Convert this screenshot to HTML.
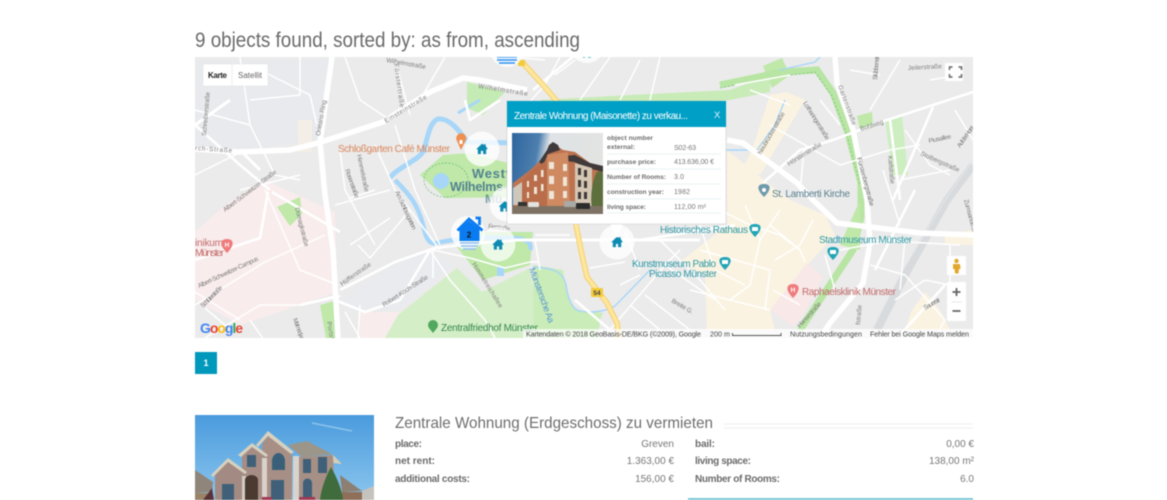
<!DOCTYPE html>
<html lang="de"><head><meta charset="utf-8"><title>9 objects found</title>
<style>
html,body{margin:0;padding:0;background:#fff;width:1167px;height:500px;overflow:hidden}
svg{display:block;position:absolute;left:0;top:0;filter:blur(.42px)}
text{font-family:"Liberation Sans",sans-serif}
.r5{stroke:#fff;stroke-width:5.5;fill:none;stroke-linejoin:round}
.r3{stroke:#fff;stroke-width:2.6;fill:none;stroke-linejoin:round}
.r2{stroke:#fff;stroke-width:1.5;fill:none;stroke-linejoin:round}
.lb{font-size:6.4px;fill:#7d7d7d}
.pop{font-size:7px;fill:#777}
.popb{font-size:6.6px;fill:#6f6f6f;font-weight:bold}
.b{font-size:10px;font-weight:bold;fill:#6c6c6c}
.v{font-size:10px;fill:#777;text-anchor:end}
.att{font-size:7.2px;fill:#444}
</style></head><body>
<svg width="1167" height="500" viewBox="0 0 1167 500" xmlns="http://www.w3.org/2000/svg">
<defs>
<clipPath id="mc"><rect x="195" y="57" width="778" height="281"/></clipPath>
<clipPath id="pc"><rect x="512" y="133" width="91" height="81"/></clipPath>
<clipPath id="hc"><rect x="195" y="415" width="179" height="85"/></clipPath>
<linearGradient id="sk" x1="0" y1="0" x2="1" y2="0.15"><stop offset="0" stop-color="#2f669f"/><stop offset=".3" stop-color="#4d7fae"/><stop offset=".42" stop-color="#dfe3e6"/><stop offset="1" stop-color="#e2e4e2"/></linearGradient>
<linearGradient id="hs" x1="0" y1="0" x2="0" y2="1"><stop offset="0" stop-color="#4a9bdd"/><stop offset="1" stop-color="#8cc6ee"/></linearGradient>
<symbol id="home" viewBox="-7 -7 14 14" overflow="visible"><path d="M0-5.6-6.3.3h1.8v5.2h3.3V2h2.4v3.5h3.3V.3h1.8L3.9-3.3V-5.2H2.6v.7z" fill="#0d8bb2"/></symbol>
</defs>

<text x="195" y="47" font-size="21" fill="#6b6b6b" textLength="385" lengthAdjust="spacingAndGlyphs">9 objects found, sorted by: as from, ascending</text>

<g clip-path="url(#mc)">
<rect x="195" y="57" width="778" height="281" fill="#ebebeb"/>
<path d="M195 60H330L320 140 240 150 195 148Z" fill="#e8eaed"/>
<path d="M195 232 225 205 265 180 335 212 337 292 285 310 240 325 195 300Z" fill="#f9ecec"/>
<path d="M360 312 407 312 410 338H360Z" fill="#f9ecec"/>
<path d="M340 300 400 262 430 250 455 265 400 310 350 312Z" fill="#e9ebee"/>
<path d="M298 120h14v32h-14z" fill="#f4eee6"/>
<path d="M727 150 770 185 790 200 825 215 835 235 810 262 770 310 775 330H707L705 275 680 262 727 225Z" fill="#fbf3e1"/>
<path d="M770 95 787 92 805 100 790 125 760 175 742 170 752 150Z" fill="#fbf3e1"/>
<path d="M807 263 823 277 800 320 793 326 770 310Z" fill="#f9e8e8"/>
<path d="M945 235 973 230V245H945ZM912 310 925 292 940 310 950 330H905Z" fill="#fbf3e1"/>
<path d="M467 82 505 92 483 115 467 108Z" fill="#c5ebb4"/>
<path d="M420 175 443 155 470 153 515 165V197L445 198Z" fill="#bfe8a9"/>
<path d="M457 247 483 280 530 265 533 232 470 232Z" fill="#bfe8a9"/>
<path d="M398 315 457 268 482 292 530 268 540 338H385Z" fill="#d4eec7"/>
<path d="M533 265 563 270 567 293 575 310 603 313 600 320 598 338H534Z" fill="#c9ecb8"/>
<path d="M277 207 300 197 302 214 290 226Z" fill="#bfe8a9"/>
<path d="M320 305 338 300 340 338H326Z" fill="#bfe8a9"/>
<path d="M885 120 902 115 908 175H893Z" fill="#cdeec0"/>
<path d="M857 116 872 112 873 128 860 130Z" fill="#bfe8a9"/>
<path d="M763 66 782 58 790 75 772 88Z" fill="#bfe8a9"/>
<path d="M540 100 630 95 730 90 770 75 770 92 730 100 560 110Z" fill="#c8ebb8"/>
<path d="M720 85 782 72 817 70 833 93 848 133 861 183 861 217 853 250 800 330" fill="none" stroke="#b8e5a4" stroke-width="7"/>
<path d="M860 200V250L840 245Z" fill="#bfe8a9"/>
<path d="M720 88 782 76 815 72 832 96 847 135 860 185" fill="none" stroke="#62b86a" stroke-width=".6" stroke-dasharray="2 2"/>
<ellipse cx="446" cy="180" rx="22" ry="17" fill="none" stroke="#6dbb7c" stroke-width=".7" stroke-dasharray="2 1.5"/>
<path d="M390 178 C396 168 420 160 424 150 428 135 430 122 438 119 448 118 458 128 467 142 480 143 495 142 512 143" fill="none" stroke="#a7d6f9" stroke-width="5"/>
<path d="M395 180 C410 195 418 205 423 225 426 240 430 245 437 243 450 240 470 236 510 238 530 238 532 245 530 250" fill="none" stroke="#a7d6f9" stroke-width="4.5"/>
<path d="M458 113 480 100" stroke="#a7d6f9" stroke-width="3"/>
<circle cx="441" cy="181" r="8" fill="#a7d6f9"/>
<rect x="497" y="267" width="7" height="9" fill="#a7d6f9"/>
<path d="M533 267C550 268 563 270 566 285 568 300 573 310 580 311 590 313 605 312 615 306L650 270" fill="none" stroke="#a7d6f9" stroke-width="1.4"/>
<path d="M780 70 815 62 820 57M785 100 775 125 757 150 725 150" fill="none" stroke="#a7d6f9" stroke-width="1.4"/>
<path d="M973 165 947 200 905 275 877 330" fill="none" stroke="#d8dbde" stroke-width="8"/>
<path d="M973 160 945 200 900 275 872 330" fill="none" stroke="#e5e6e8" stroke-width="1"/>
<g class="r2">
<path d="M195 175 245 150M195 110 250 125 275 175 300 180M240 57 250 125M300 57V95L250 100M260 70 310 95 318 130M345 57 360 100 390 120M395 60 410 115M445 57 420 100M395 125 415 190 440 245"/>
<path d="M340 150 345 190 375 245M375 145 395 190 440 250M375 190 350 198M265 190 300 270 338 285M195 305 265 262 325 235M240 190 300 175M335 205 390 190M385 240 410 210M350 245 390 218M358 245 370 258 385 240"/>
<path d="M250 320 285 370M345 312 360 338M360 305 358 338M430 250 450 280 485 320 495 338M433 250V278M433 250 470 258 505 268 530 262 538 262"/>
<path d="M195 292 240 320M205 338 260 305 300 305 335 296M205 308 225 325"/>
<path d="M535 240 540 270M535 235H570M545 60 510 57M560 57 545 85 515 118M575 60 555 75M610 57 580 100M640 60 620 100M660 57 650 100"/>
<path d="M625 232 640 270M660 240 700 280 725 310M610 330 665 265 680 250M665 265 715 300M645 295 690 330M620 285 640 275M630 305 660 330M590 268 625 262"/>
<path d="M720 210 750 225 780 235 800 250 805 262M745 205 760 240 750 285 730 300M700 250 770 270 765 310M780 210 760 240M715 270 745 285M690 290 770 310M770 225 800 250M813 220 800 245 775 260M773 290 800 305M700 225 712 262"/>
<path d="M735 85 790 75M790 105 750 90M770 125 840 165M804 150 800 192M840 125 820 100M900 60 870 110M930 80 960 75M880 75 850 70M900 180 950 170M905 130 930 165 950 175M955 110 973 140M840 165 890 150 920 145M883 170 900 225M873 240 960 245M840 250 905 238M905 238 900 290M950 245 950 290M895 300 925 280 950 285M870 265 905 275 945 320M835 290 825 255M945 320 935 338"/>
</g>
<g class="r3">
<path d="M195 125 240 165 270 190M268 192 260 238 195 260M272 192 340 232M340 290 395 262 435 248 480 243 520 240 580 240 615 240M430 250 400 300 365 312 335 300M300 305 340 296M500 100 470 120 465 100M533 90 575 55M515 118 560 115"/>
<path d="M575 300 610 330M640 240 735 225M833 140 887 120 973 92M763 183 800 150 833 140M890 120 900 200M933 107 893 200M915 190 875 270M900 335 945 285"/>
</g>
<g class="r5">
<path d="M195 149 238 152 290 150 318 143 383 122 430 92 463 78 480 80 527 90"/>
<path d="M332 57 320 142 325 195 333 250 338 338"/>
<path d="M727 140 743 143 797 183 813 200 837 223 870 227 920 233 973 235"/>
<path d="M835 57 837 83 853 130 867 200 870 243 863 283 830 323 820 338"/>
<path d="M230 100 195 125" stroke-width="3"/>
<path d="M260 170 240 150" stroke-width="3"/>
</g>
<path d="M515 240H700" stroke="#fff" stroke-width="3"/>
<path d="M522 62 543 85 560 105 575 130V220L583 260 587 277 607 303 617 323 619 338" fill="none" stroke="#f4cf6d" stroke-width="5.5"/>
<path d="M522 62 543 85 560 105 575 130V220L583 260 587 277 607 303 617 323 619 338" fill="none" stroke="#fee69c" stroke-width="3.6"/>
<rect x="591" y="288" width="12" height="9" rx="1" fill="#f3cc3c"/>
<text x="597" y="295" font-size="6.5" font-weight="bold" text-anchor="middle" fill="#444">54</text>
<rect x="518" y="60" width="7" height="6" fill="#f3cc3c"/>
<g class="lb">
<text transform="translate(386,123) rotate(-31)" textLength="48">Einsteinstraße</text>
<text x="478" y="88" transform="rotate(9 478 88)" textLength="50">Wilhelmstraße</text>
<text x="386" y="62" transform="rotate(10 386 62)" textLength="40">Wilhelmstraße</text>
<text x="195" y="150" transform="rotate(4 195 150)" textLength="37">rch-Straße</text>
<text transform="translate(320,136) rotate(-80)" textLength="36">Orléans-Ring</text>
<text transform="translate(394,64) rotate(82)" textLength="44">Förstertraße</text>
<text transform="translate(206,136) rotate(-85)" textLength="44">Schreiberstraße</text>
<text transform="translate(225,212) rotate(-37)" textLength="65">Albert-Schweitzer-Straße</text>
<text transform="translate(199,288) rotate(-25)" textLength="66">Albert-Schweitzer-Campus</text>
<text transform="translate(295,208) rotate(76)" textLength="40">Domagkstraße</text>
<text transform="translate(342,286) rotate(-35)" textLength="36">Hüfferstraße</text>
<text transform="translate(384,307) rotate(-33)" textLength="53">Robert-Koch-Straße</text>
<text transform="translate(203,308) rotate(-45)" textLength="28">Schlüterstraße</text>
<text transform="translate(293,319) rotate(70)" textLength="28">Malmedyweg</text>
<text transform="translate(327,322) rotate(80)" textLength="20">Portstr</text>
<text transform="translate(395,192) rotate(65)" textLength="42">Am Schlossgarten</text>
<text transform="translate(357,155) rotate(78)" textLength="38">Himmelstraße</text>
<text transform="translate(345,170) rotate(70)" textLength="30">Rosenstraße</text>
<text transform="translate(472,264) rotate(58)" textLength="52">Himmelreichallee</text>
<text transform="translate(488,228) rotate(8)" textLength="22">Ferstraße</text>
<text transform="translate(671,302) rotate(30)" textLength="24">Breite G.</text>
<text transform="translate(803,103) rotate(58)" textLength="44">Lotharingerstraße</text>
<text transform="translate(761,155) rotate(-60)" textLength="48">Neubrückenstraße</text>
<text transform="translate(789,166) rotate(-32)" textLength="39">Hörsterstraße</text>
<text transform="translate(838,86) rotate(70)" textLength="42">Gartenstraße</text>
<text transform="translate(857,158) rotate(75)" textLength="50" fill="#666">Fürstenbergstraße</text>
<text x="861" y="131" transform="rotate(-18 861 131)" textLength="24">Bohlweg</text>
<text x="908" y="70" transform="rotate(-3 908 70)" textLength="34">Jeilerstraße</text>
<text transform="translate(877,80) rotate(-85)" textLength="24">Stübbenstr</text>
<text transform="translate(888,156) rotate(85)" textLength="28">Karlstraße</text>
<text x="929" y="143" transform="rotate(-12 929 143)" textLength="23">Piusallee</text>
<text x="920" y="155" transform="rotate(24 920 155)" textLength="42">Stolbergstraße</text>
<text transform="translate(960,148) rotate(-55)" textLength="25">Auf der Horst</text>
<text transform="translate(964,200) rotate(75)" textLength="44">Zumsandestraße</text>
<text transform="translate(800,328) rotate(-48)" textLength="32">Hansestraße</text>
<text transform="translate(860,325) rotate(-85)" textLength="20">fstraße</text>
<text transform="translate(925,310) rotate(-30)" textLength="18">Sauerstr</text>
</g>
<text x="338" y="152" font-size="10" fill="#d9865a" textLength="112">Schloßgarten Café Münster</text>
<path d="M457 141a5 5 0 1 1 8.4 0L461 150Z" fill="#ee8f4f"/><rect x="459.5" y="140" width="3" height="4" fill="#fff"/>
<text x="472" y="178" font-size="13" font-weight="bold" fill="#52828f" textLength="38">Westf</text>
<text x="450" y="191" font-size="12.5" font-weight="bold" fill="#52828f" textLength="57">Wilhelms-</text>
<text x="485" y="203" font-size="12" font-weight="bold" fill="#52828f" opacity=".75">Mü</text>
<text x="195" y="246" font-size="10" fill="#c26a6a" textLength="28">inikum</text>
<text x="195" y="256" font-size="10" fill="#c26a6a" textLength="29">Münster</text>
<path d="M227 253 c-8-8-7-14 0-14 7 0 8 6 0 14Z" fill="#ef7c7c"/><text x="227" y="247" font-size="6.5" fill="#fff" text-anchor="middle" font-weight="bold">H</text>
<text x="441" y="331" font-size="10" fill="#35884e" textLength="97">Zentralfriedhof Münster</text>
<circle cx="433" cy="325" r="5" fill="#52a85f"/><path d="M429 328 433 333 437 328Z" fill="#52a85f"/>
<text transform="translate(529,269) rotate(70)" font-size="9" fill="#5a97d0" textLength="58">Münstersche Aa</text>
<text x="660" y="233" font-size="10" fill="#2e9aa6" textLength="88">Historisches Rathaus</text>
<path d="M755 237c-8-8-7-13 0-13 7 0 8 5 0 13Z" fill="#23a5b5"/><rect x="752" y="227" width="6" height="4" fill="#fff"/>
<text x="632" y="267" font-size="10" fill="#2e9aa6" textLength="84">Kunstmuseum Pablo</text>
<text x="649" y="277" font-size="10" fill="#2e9aa6" textLength="68">Picasso Münster</text>
<path d="M725 270c-8-8-7-13 0-13 7 0 8 5 0 13Z" fill="#23a5b5"/><rect x="722" y="260" width="6" height="4" fill="#fff"/>
<text x="819" y="243" font-size="10" fill="#2e9aa6" textLength="93">Stadtmuseum Münster</text>
<path d="M833 260c-8-8-7-13 0-13 7 0 8 5 0 13Z" fill="#23a5b5"/><rect x="830" y="250" width="6" height="4" fill="#fff"/>
<text x="772" y="197" font-size="10" fill="#5b8190" textLength="78">St. Lamberti Kirche</text>
<path d="M764 197c-8-8-7-13 0-13 7 0 8 5 0 13Z" fill="#6f9bad"/><circle cx="764" cy="190" r="2" fill="#fff"/>
<text x="802" y="295" font-size="10" fill="#c26a6a" textLength="94">Raphaelsklinik Münster</text>
<path d="M793 298c-8-8-7-14 0-14 7 0 8 6 0 14Z" fill="#ef7c7c"/><text x="793" y="292" font-size="6.5" fill="#fff" text-anchor="middle" font-weight="bold">H</text>

<circle cx="507" cy="50" r="17" fill="#fff" fill-opacity=".78"/>
<path d="M497 57h20M497 60h20M499 63h16" stroke="#2a8ff0" stroke-width="1.6"/>
<circle cx="587" cy="45" r="18" fill="#fff" fill-opacity=".78"/>
<path d="M583 57h2M588 57h3" stroke="#4bb" stroke-width="1.6"/>
<circle cx="482" cy="149" r="17.5" fill="#fff" fill-opacity=".78"/>
<use href="#home" x="475.5" y="142.5" width="13" height="13"/>
<circle cx="507" cy="204" r="17.5" fill="#fff" fill-opacity=".78"/>
<use href="#home" x="498" y="200" width="13" height="13"/>
<circle cx="468" cy="233" r="17" fill="#fff" fill-opacity=".8"/>
<circle cx="498" cy="244" r="17.5" fill="#fff" fill-opacity=".72"/>
<use href="#home" x="491.5" y="238" width="13" height="13"/>
<path d="M475.500 218h4v7M457.500 230.500 469 219 482.500 230.500" fill="none" stroke="#0a7cf2" stroke-width="2.8"/>
<path d="M459.500 229.500 469 221 479.500 229.500V241h-20Z" fill="#0a7cf2"/>
<text x="469" y="237.500" font-size="8" font-weight="bold" text-anchor="middle" fill="#111">2</text>
<path d="M460 243h19M461 246h17M463 249h13" stroke="#8dbdf2" stroke-width="1.400"/>
<circle cx="617" cy="242" r="17.500" fill="#fff" fill-opacity=".78"/>
<use href="#home" x="610.500" y="235.500" width="13" height="13"/>

<rect x="523" y="329" width="450" height="9" fill="#fff" fill-opacity=".72"/>
<text x="526" y="336.500" class="att" textLength="175">Kartendaten © 2018 GeoBasis-DE/BKG (©2009), Google</text>
<text x="710" y="336.500" class="att" textLength="20">200 m</text>
<path d="M732.500 333v2.500h48.500v-2.500" fill="none" stroke="#555" stroke-width="1"/>
<text x="790" y="336.500" class="att" textLength="72">Nutzungsbedingungen</text>
<text x="870" y="336.500" class="att" textLength="99">Fehler bei Google Maps melden</text>
<text x="200" y="333" font-size="14" font-weight="bold" textLength="43"><tspan fill="#4285f4">G</tspan><tspan fill="#ea4335">o</tspan><tspan fill="#fbbc05">o</tspan><tspan fill="#4285f4">g</tspan><tspan fill="#34a853">l</tspan><tspan fill="#ea4335">e</tspan></text>
<rect x="203" y="64" width="65" height="22" fill="#fff" stroke="#ddd" stroke-width=".4"/>
<path d="M232 64v22" stroke="#eee"/>
<text x="208" y="78" font-size="8" font-weight="bold" fill="#222" textLength="19">Karte</text>
<text x="238" y="78" font-size="8" fill="#666" textLength="24">Satellit</text>
<rect x="945" y="63" width="18" height="18" fill="#fff"/>
<path d="M949.500 70v-3h3M958.500 67h3v3M961.500 74v3h-3M952.500 77h-3v-3" fill="none" stroke="#666" stroke-width="1.500"/>
<rect x="947" y="256" width="19" height="19" fill="#fff"/>
<circle cx="956.500" cy="261" r="2.200" fill="#e2a82e"/><path d="M953 264h7l.500 5h-1.500l-.500 4.500h-3.500l-.500-4.500h-1.500Z" fill="#e2a82e"/>
<rect x="947" y="282" width="19" height="39" rx="1" fill="#fff"/>
<path d="M951.500 302h10" stroke="#e6e6e6"/>
<path d="M952.500 292h8M956.500 288v8M952.500 311h8" stroke="#666" stroke-width="1.800"/>
</g>

<path d="M610 223 617 238 623 223Z" fill="#fff"/>
<rect x="507" y="101" width="219" height="123" fill="#fff" stroke="#bbb" stroke-width=".4"/>
<rect x="507" y="101" width="219" height="26" fill="#009fc5"/>
<text x="514" y="119" font-size="10" fill="#fff" textLength="174">Zentrale Wohnung (Maisonette) zu verkau...</text>
<text x="714" y="118" font-size="9.500" fill="#e5f5fa">X</text>
<g clip-path="url(#pc)">
<rect x="512" y="133" width="91" height="81" fill="url(#sk)"/>
<path d="M512 133h40l-6 14-34 12Z" fill="#386f a8" opacity="0"/>
<path d="M513 183 530 170 541 160 551 150 553 143 557 146 563 150 575 152 590 163 603 166V208H513Z" fill="#bd7350"/>
<path d="M539 162 547 150 549 145 553 142 558 145 560 150 548 154 543 165ZM565 156 575 155 590 163 603 166V172L588 168 574 162 565 161Z" fill="#403a3a"/>
<path d="M547 155 568 152 570 207H547Z" fill="#cf8a62"/>
<path d="M575 163 592 168V206H575Z" fill="#d5c5b3"/>
<path d="M513 188 522 182V205H513Z" fill="#d0c7bb"/>
<path d="M522 182 530 172 547 160V207H522Z" fill="#b96d4a"/>
<g fill="#efe6d8">
<rect x="549" y="162" width="5" height="7"/><rect x="549" y="176" width="5" height="8"/><rect x="549" y="191" width="5" height="8"/>
<rect x="563" y="164" width="4" height="7"/><rect x="563" y="177" width="4" height="9"/><rect x="563" y="191" width="4" height="7"/>
<rect x="534" y="175" width="3" height="6"/><rect x="534" y="187" width="3" height="7"/><rect x="541" y="170" width="2.500" height="7"/><rect x="541" y="184" width="2.500" height="7"/><rect x="527" y="181" width="2" height="6"/><rect x="527" y="192" width="2" height="6"/>
</g>
<g fill="#3e3936"><rect x="578" y="168" width="3" height="7"/><rect x="584" y="170" width="3" height="7"/><rect x="578" y="180" width="3" height="7"/><rect x="584" y="181" width="3" height="7"/><rect x="578" y="192" width="3" height="7"/><rect x="584" y="192" width="3" height="7"/></g>
<path d="M597 172c5-3 7 2 6 6v30h-11c-2-10 0-28 5-36Z" fill="#5c6f3c"/>
<rect x="512" y="206" width="91" height="8" fill="#7d7263"/>
<rect x="564" y="201" width="12" height="6" rx="1" fill="#a9a9a6"/><rect x="576" y="203" width="14" height="6" rx="1" fill="#2c2c2c"/><rect x="528" y="202" width="11" height="5" rx="1" fill="#e3e3e0"/><rect x="518" y="202" width="9" height="4" fill="#333"/>
</g>
<g stroke="#e8eeee" stroke-width=".8"><path d="M607 154h114M607 169h114M607 184h114M607 199h114M607 213h114"/></g>
<text x="607" y="140" class="popb" textLength="46">object number</text>
<text x="607" y="149" class="popb" textLength="28">external:</text>
<text x="674" y="150" class="pop" textLength="22">S02-63</text>
<text x="607" y="164" class="popb" textLength="49">purchase price:</text>
<text x="674" y="164" class="pop" textLength="40">413.636,00 €</text>
<text x="607" y="179" class="popb" textLength="59">Number of Rooms:</text>
<text x="674" y="179" class="pop" textLength="10">3.0</text>
<text x="607" y="194" class="popb" textLength="57">construction year:</text>
<text x="674" y="194" class="pop" textLength="16">1982</text>
<text x="607" y="209" class="popb" textLength="39">living space:</text>
<text x="674" y="209" class="pop" textLength="32">112,00 m²</text>

<rect x="195" y="352" width="22" height="22" fill="#0099bc"/>
<text x="206" y="366" font-size="9" font-weight="bold" fill="#fff" text-anchor="middle">1</text>

<g clip-path="url(#hc)">
<rect x="195" y="415" width="179" height="85" fill="url(#hs)"/>
<path d="M312 423 352 431" stroke="#a6d3f0" stroke-width="1.500" opacity=".7"/>
<path d="M195 470 213 482 212 492 195 493Z" fill="#90857a"/>
<path d="M195 493h17v7h-17Z" fill="#9a8468"/>
<path d="M203 500 212 488 214 500Z" fill="#5a3338"/>
<path d="M340 475 362 491 342 492Z" fill="#8d8072"/>
<path d="M342 492h26v8h-26Z" fill="#8f6e5a"/>
<path d="M362 491 374 486V500H362Z" fill="#c6c2bc"/>
<path d="M288 445 307 441 332 454 302 457Z" fill="#9c968a"/>
<path d="M332 454 342 464 333 463Z" fill="#d5cdb8"/>
<path d="M299 457 333 455 335 500H299Z" fill="#a68f85"/>
<path d="M293 456H299V500H293Z" fill="#d8d4cd"/>
<path d="M268 433 292 453V500H262V445Z" fill="#a88f86"/>
<path d="M252 444 267 454 262 500H242V454Z" fill="#a58d85"/>
<path d="M228 459 246 473 242 500H215V474Z" fill="#a38b83"/>
<path d="M262 458H267V500H262Z" fill="#d8d2ca"/>
<path d="M242 476H246V500H242Z" fill="#d2ccc4"/>
<path d="M211 475 228 458 247 472 245 474 228 462 213 477ZM238 455 252 443 268 455 266 457 252 447 241 457ZM256 445 268 431 294 452 291 454 268 436 258 447Z" fill="#d7d1bf"/>
<path d="M285 470V461a6.500 8 0 0 0-13 0v9Z" fill="#3a6079"/>
<path d="M247 455h9v12h-9zM303 459h8v14h-8zM318 457h9v16h-9zM222 484h12v16h-12zM271 480h13v20h-13zM303 483a4.500 4.500 0 0 1 9 0v15h-9z" fill="#3f6078"/>
<path d="M245 500V480a6.500 5 0 0 1 13 0v20Z" fill="#4a3a30"/>
<path d="M331 467C338 480 342 490 343 500H320C321 490 325 478 331 467Z" fill="#3f6b3d"/>
<path d="M262 497h10v3h-10zM299 497h16v3h-16z" fill="#a03a55"/>
</g>

<text x="395" y="428" font-size="16" fill="#6e6e6e" textLength="318" lengthAdjust="spacingAndGlyphs">Zentrale Wohnung (Erdgeschoss) zu vermieten</text>
<path d="M724 424H973M724 428H973" stroke="#f0f0f0" stroke-width="1.200"/>
<text x="395" y="447" class="b" textLength="27">place:</text>
<text x="395" y="464" class="b" textLength="40">net rent:</text>
<text x="395" y="482" class="b" textLength="75">additional costs:</text>
<text x="674" y="447" class="v">Greven</text>
<text x="674" y="464" class="v">1.363,00 €</text>
<text x="674" y="482" class="v">156,00 €</text>
<text x="695" y="447" class="b" textLength="20">bail:</text>
<text x="695" y="464" class="b" textLength="56">living space:</text>
<text x="695" y="482" class="b" textLength="85">Number of Rooms:</text>
<text x="974" y="447" class="v">0,00 €</text>
<text x="974" y="464" class="v">138,00 m²</text>
<text x="974" y="482" class="v">6.0</text>
<rect x="688" y="498" width="285" height="2" fill="#7cc8d8"/>
</svg>
</body></html>
